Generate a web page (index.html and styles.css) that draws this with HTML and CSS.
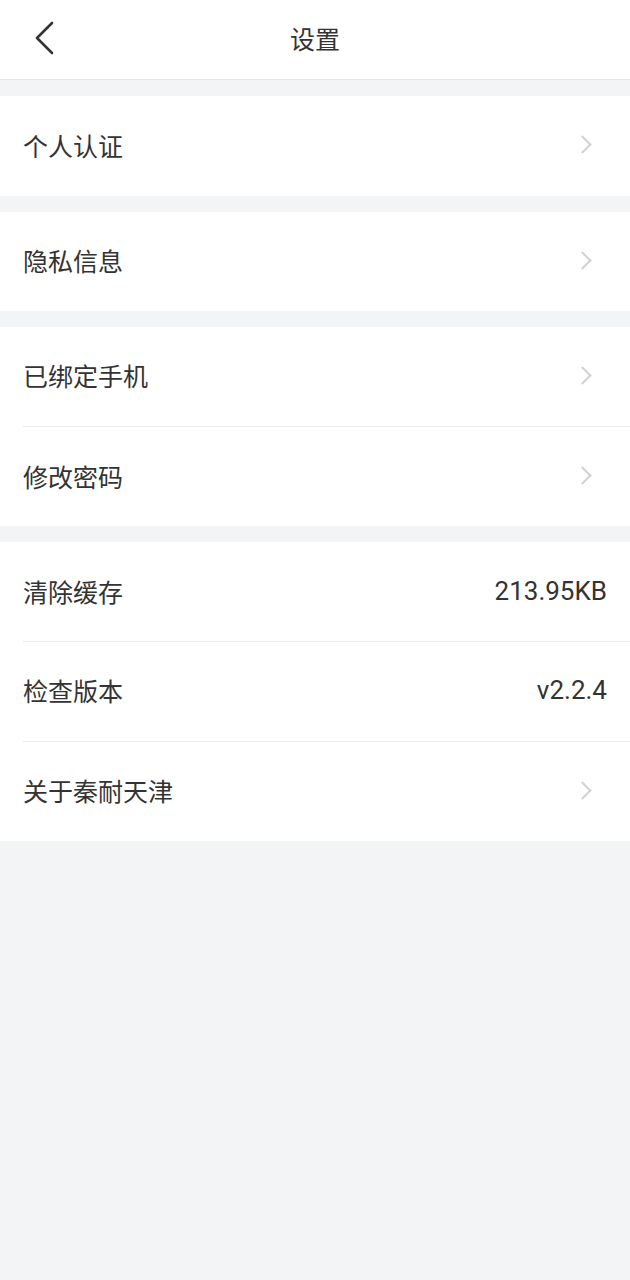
FILE: index.html
```html
<!DOCTYPE html>
<html lang="zh-CN">
<head>
  <meta charset="UTF-8">
  <title>设置</title>
  <link rel="stylesheet" href="styles.css">
</head>
<body>
  <div class="header">
    <a href="#" class="back">
      <svg width="24" height="36" viewBox="0 0 24 36"><path d="M19 3 L4 18 L19 33" fill="none" stroke="#333" stroke-width="2.6" stroke-linecap="round" stroke-linejoin="round"/></svg>
    </a>
    <h2>设置</h2>
  </div>

  <div class="group">
    <div class="row"><span>个人认证</span><i class="arrow"></i></div>
  </div>

  <div class="group">
    <div class="row"><span>隐私信息</span><i class="arrow"></i></div>
  </div>

  <div class="group">
    <div class="row"><span>已绑定手机</span><i class="arrow"></i></div>
    <div class="row"><span>修改密码</span><i class="arrow"></i></div>
  </div>

  <div class="group">
    <div class="row"><span>清除缓存</span><span class="value">213.95KB</span></div>
    <div class="row"><span>检查版本</span><span class="value">v2.2.4</span></div>
    <div class="row"><span>关于秦耐天津</span><i class="arrow"></i></div>
  </div>
</body>
</html>
```

FILE: styles.css
```css
body {
  margin: 0;
  font-family: Roboto, "Noto Sans CJK SC", sans-serif;
  background: #f3f4f6;
  color: #333;
}
.header {
  position: relative;
  height: 79px;
  background: #fff;
  border-bottom: 1px solid #e6e6e6;
  display: flex;
  align-items: center;
  justify-content: center;
}
.header h2 {
  margin: 0 0 4px;
  font-size: 25px;
  font-weight: normal;
}
.back {
  position: absolute;
  left: 33px;
  top: 20px;
  display: block;
  height: 36px;
}
.group {
  background: #fff;
  margin-top: 16px;
  padding-left: 23px;
}
.row {
  box-sizing: border-box;
  height: 99.6px;
  display: flex;
  align-items: center;
  justify-content: space-between;
  padding-right: 23px;
  font-size: 25px;
  border-bottom: 1px solid #eaeaea;
}
.row:last-child {
  border-bottom: none;
}
.row span {
  margin-top: -2px;
}
.value {
  font-size: 26px;
}
.arrow {
  width: 11px;
  height: 11px;
  border-top: 2px solid #d2d2d2;
  border-right: 2px solid #d2d2d2;
  transform: rotate(45deg);
  margin-right: 18px;
  margin-top: -2px;
}
```
